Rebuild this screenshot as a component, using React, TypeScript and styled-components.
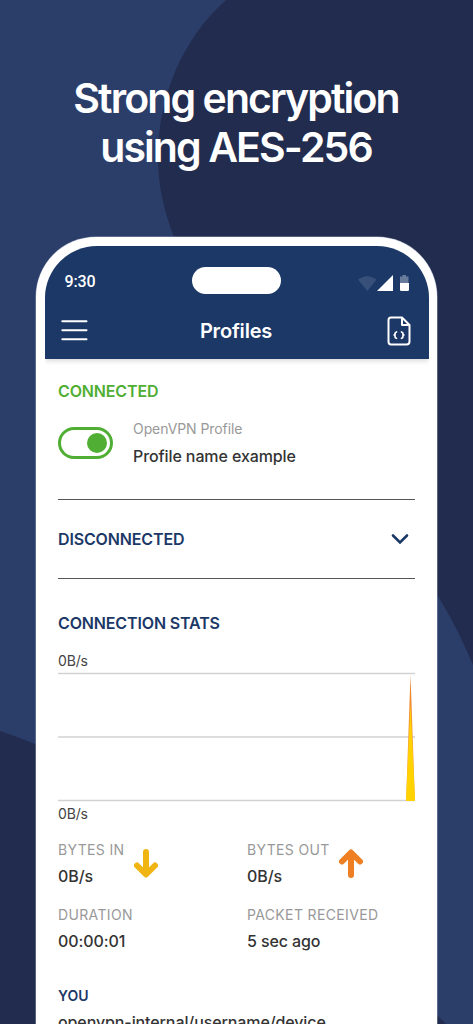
import React from "react";
import styled, { createGlobalStyle } from "styled-components";

const Global = createGlobalStyle`
  *, *::before, *::after { box-sizing: border-box; }
  body { margin: 0; overflow: hidden; font-family: Inter, "Liberation Sans", sans-serif; }
`;

const navy = "#1b3867";

const Page = styled.main`
  position: relative;
  width: 473px;
  height: 1024px;
  overflow: hidden;
  display: flex;
  flex-direction: column;
  align-items: center;
  background: #2b3d69;
`;

const Backdrop = styled.svg`
  position: absolute;
  inset: 0;
`;

const Headline = styled.h1`
  position: relative;
  margin: 0;
  padding-top: 74px;
  padding-right: 1px;
  height: 237px;
  flex: none;
  color: #fff;
  font-size: 41px;
  line-height: 49px;
  font-weight: 600;
  letter-spacing: -1.9px;
  text-align: center;
`;

const Phone = styled.div`
  position: relative;
  flex: none;
  width: 401px;
  height: 860px;
  padding: 9px 8.5px 0;
  border-radius: 60px 60px 0 0;
  background: #fff;
  box-shadow: 0 0 0 0.5px #8c97b2;
`;

const Screen = styled.div`
  height: 100%;
  border-radius: 52px 52px 0 0;
  overflow: hidden;
  background: #fff;
`;

const Header = styled.header`
  height: 113px;
  background: ${navy};
  color: #fff;
  box-shadow: 0 1px 6px rgba(0, 0, 0, 0.2);
`;

const StatusBar = styled.div`
  display: grid;
  grid-template-columns: 1fr 89px 1fr;
  align-items: center;
  height: 70px;
  padding: 0 20px 0 20px;
`;

const Clock = styled.span`
  font: 500 16px/20px Roboto, sans-serif;
  letter-spacing: -0.1px;
  padding-top: 1px;
`;

const Island = styled.div`
  height: 27px;
  margin-bottom: 1px;
  border-radius: 14px;
  background: #fff;
`;

const StatusIcons = styled.div`
  display: flex;
  justify-content: flex-end;
  padding-top: 5px;
`;

const NavBar = styled.div`
  display: grid;
  grid-template-columns: 1fr auto 1fr;
  align-items: center;
  height: 30px;
  padding: 0 18px 0 15px;
`;

const NavTitle = styled.h2`
  margin: 0;
  padding-left: 2px;
  font-size: 20px;
  line-height: 24px;
  font-weight: 600;
  letter-spacing: -0.2px;
`;

const NavEnd = styled.div`
  display: flex;
  justify-content: flex-end;
`;

const Content = styled.div`
  padding: 20px 13.5px 0 13.5px;
`;

const Heading = styled.h3<{ $color?: string }>`
  margin: 0;
  font-size: 16px;
  line-height: 24px;
  font-weight: 600;
  letter-spacing: -0.14px;
  color: ${(p) => p.$color ?? navy};
`;

const ProfileRow = styled.div`
  display: flex;
  align-items: center;
  gap: 20px;
  height: 54px;
  margin: 13px 0 29px;
`;

const Toggle = styled.div`
  display: flex;
  justify-content: flex-end;
  align-items: center;
  width: 55px;
  height: 32px;
  padding-right: 3px;
  border: 3px solid #4fae33;
  border-radius: 16px;
`;

const Knob = styled.div`
  width: 20px;
  height: 20px;
  border-radius: 50%;
  background: #4fae33;
`;

const Caption = styled.div<{ $spacing?: number }>`
  font-size: 14px;
  line-height: 20px;
  letter-spacing: ${(p) => p.$spacing ?? -0.08}px;
  color: #999;
`;

const Value = styled.div`
  font-size: 16px;
  line-height: 24px;
  font-weight: 500;
  letter-spacing: -0.1px;
  color: #333;
`;

const ProfileText = styled.div`
  ${Value} { margin-top: 5px; }
`;

const Accordion = styled.div`
  display: flex;
  align-items: center;
  justify-content: space-between;
  height: 80px;
  padding-right: 6.5px;
  border: solid #555;
  border-width: 1px 0;
`;

const Stats = styled.section`
  padding-top: 32px;
`;

const AxisLabel = styled.div`
  font-size: 14px;
  line-height: 20px;
  letter-spacing: -0.15px;
  color: #444;
`;

const Chart = styled.svg`
  display: block;
  margin: 1px 0 2px;
`;

const StatGrid = styled.div`
  display: grid;
  grid-template-columns: 189px 1fr;
  row-gap: 15px;
  margin-top: 15px;
`;

const Stat = styled.div`
  display: flex;
  align-items: center;
  gap: 9.5px;
  height: 50px;
  ${Value} { margin-top: 4px; }
`;

const Peer = styled.div`
  margin-top: 32px;
`;

const PeerTitle = styled.h4`
  margin: 0;
  font-size: 14px;
  line-height: 20px;
  font-weight: 600;
  color: ${navy};
`;

const Arrow = ({ color, up }: { color: string; up?: boolean }) => (
  <svg width="24" height="32" viewBox="0 0 24 32" fill="none" stroke={color} strokeWidth="6" strokeLinecap="round" strokeLinejoin="round">
    <path d={up ? "M12 27V5M3 13.5L12 4.5L21 13.5" : "M12 4V26M3 17.5L12 26.5L21 17.5"} />
  </svg>
);

export default function App() {
  return (
    <Page>
      <Global />
      <Backdrop width="473" height="1024" viewBox="0 0 473 1024">
        <path d="M226 0C180 41 158 100 158 158C158 185 164 211 174 237L400 540C420 569 449 606 473 665V0Z" fill="#222c4e" />
        <path d="M0 731Q18 737 35 744C200 815 340 920 446 1024H0Z" fill="#222c4e" />
      </Backdrop>
      <Headline>Strong encryption<br />using AES-256</Headline>
      <Phone>
        <Screen>
          <Header>
            <StatusBar>
              <Clock>9:30</Clock>
              <Island />
              <StatusIcons>
                <svg width="51" height="18" viewBox="0 0 51 18">
                  <path d="M0 4.5Q9.3 -2.5 18.6 4.5L9.3 16Z" fill="#fff" opacity="0.12" />
                  <path d="M35 0V16H19Z" fill="#fff" />
                  <path d="M42 1.5H44.5V0H48V1.5H50.5V8H42Z" fill="#fff" opacity="0.34" />
                  <path d="M42 8H51V14.7Q51 16 49.7 16H43.3Q42 16 42 14.7Z" fill="#fff" />
                </svg>
              </StatusIcons>
            </StatusBar>
            <NavBar>
              <svg width="28" height="22" viewBox="0 0 28 22" stroke="#fff" strokeWidth="2" strokeLinecap="round">
                <path d="M2.3 1.3H26.5M2.3 10.2H26.5M2.3 19.2H26.5" />
              </svg>
              <NavTitle>Profiles</NavTitle>
              <NavEnd>
                <svg width="24" height="30" viewBox="0 0 24 30" fill="none" stroke="#fff" strokeWidth="2" strokeLinejoin="round" strokeLinecap="round">
                  <path d="M4 1.5H15L22.5 9V25.5Q22.5 28.5 19.5 28.5H4Q1.5 28.5 1.5 25.5V4Q1.5 1.5 4 1.5ZM15 1.5V9H22.5" />
                  <path d="M9.5 16Q7.5 17 8.2 18.2L7.2 19L8.2 19.8Q7.5 21.5 9.5 22.3M14.5 16Q16.5 17 15.8 18.2L16.8 19L15.8 19.8Q16.5 21.5 14.5 22.3" strokeWidth="1.7" />
                </svg>
              </NavEnd>
            </NavBar>
          </Header>
          <Content>
            <Heading $color="#4fae33">CONNECTED</Heading>
            <ProfileRow>
              <Toggle><Knob /></Toggle>
              <ProfileText>
                <Caption>OpenVPN Profile</Caption>
                <Value>Profile name example</Value>
              </ProfileText>
            </ProfileRow>
            <Accordion>
              <Heading>DISCONNECTED</Heading>
              <svg width="18" height="12" viewBox="0 0 18 12" fill="none" stroke={navy} strokeWidth="2.6" strokeLinecap="round">
                <path d="M2 2.5L9 9.5L16 2.5" />
              </svg>
            </Accordion>
            <Stats>
              <Heading>CONNECTION STATS</Heading>
              <AxisLabel style={{ marginTop: 16 }}>0B/s</AxisLabel>
              <Chart width="357" height="130" viewBox="0 0 357 130">
                <defs>
                  <linearGradient id="spike" x1="0" y1="0" x2="0" y2="1">
                    <stop offset="0" stopColor="#ed7d22" />
                    <stop offset="1" stopColor="#f8b45c" />
                  </linearGradient>
                </defs>
                <path d="M0 1.5H357M0 65H357M0 128.5H357" stroke="#d2d2d2" strokeWidth="1.3" />
                <path d="M352.5 3L357 129H348Z" fill="url(#spike)" />
                <path d="M352.5 32L357 129H348Z" fill="#ffd200" />
              </Chart>
              <AxisLabel>0B/s</AxisLabel>
              <StatGrid>
                <Stat>
                  <div><Caption $spacing={0.35}>BYTES IN</Caption><Value>0B/s</Value></div>
                  <Arrow color="#f0b413" />
                </Stat>
                <Stat>
                  <div><Caption $spacing={0.35}>BYTES OUT</Caption><Value>0B/s</Value></div>
                  <Arrow color="#ee7f22" up />
                </Stat>
                <Stat>
                  <div><Caption $spacing={0.35}>DURATION</Caption><Value>00:00:01</Value></div>
                </Stat>
                <Stat>
                  <div><Caption $spacing={0.35}>PACKET RECEIVED</Caption><Value>5 sec ago</Value></div>
                </Stat>
              </StatGrid>
              <Peer>
                <PeerTitle>YOU</PeerTitle>
                <Value style={{ marginTop: 4 }}>openvpn-internal/username/device</Value>
              </Peer>
            </Stats>
          </Content>
        </Screen>
      </Phone>
    </Page>
  );
}
